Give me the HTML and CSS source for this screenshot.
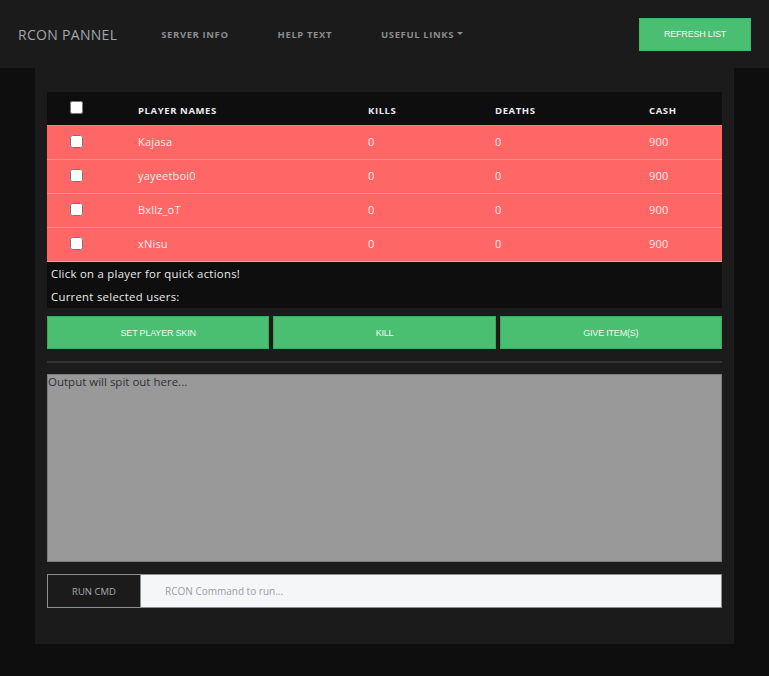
FILE: index.html
```html
<!DOCTYPE html>
<html>
<head>
<meta charset="utf-8">
<link rel="stylesheet" href="styles.css">
</head>
<body>
<nav class="navbar">
  <div class="brand">RCON PANNEL</div>
  <ul class="nav-links">
    <li class="nav-item">SERVER INFO</li>
    <li class="nav-item">HELP TEXT</li>
    <li class="nav-item">USEFUL LINKS<span class="caret"></span></li>
  </ul>
  <button class="btn btn-refresh">REFRESH LIST</button>
</nav>
<main class="container">
  <table class="players">
    <thead>
      <tr>
        <th class="c-check"><input type="checkbox"></th>
        <th class="c-name">PLAYER NAMES</th>
        <th class="c-kills">KILLS</th>
        <th class="c-deaths">DEATHS</th>
        <th class="c-cash">CASH</th>
      </tr>
    </thead>
    <tbody>
      <tr><td class="c-check"><input type="checkbox"></td><td>Kajasa</td><td>0</td><td>0</td><td>900</td></tr>
      <tr><td class="c-check"><input type="checkbox"></td><td>yayeetboi0</td><td>0</td><td>0</td><td>900</td></tr>
      <tr><td class="c-check"><input type="checkbox"></td><td>Bxllz_oT</td><td>0</td><td>0</td><td>900</td></tr>
      <tr><td class="c-check"><input type="checkbox"></td><td>xNisu</td><td>0</td><td>0</td><td>900</td></tr>
    </tbody>
  </table>
  <div class="info">
    <p>Click on a player for quick actions!</p>
    <p>Current selected users:</p>
  </div>
  <div class="actions">
    <button class="btn btn-action">SET PLAYER SKIN</button>
    <button class="btn btn-action">KILL</button>
    <button class="btn btn-action">GIVE ITEM(S)</button>
  </div>
  <hr class="divider">
  <div class="output">Output will spit out here...</div>
  <div class="cmd-row">
    <button class="btn btn-run">RUN CMD</button>
    <input class="cmd-input" type="text" placeholder="RCON Command to run...">
  </div>
</main>
</body>
</html>
```
FILE: styles.css
```css
* { box-sizing: border-box; }
html, body {
  margin: 0;
  padding: 0;
  background: #0e0e0e;
  font-family: "Open Sans", "DejaVu Sans", sans-serif;
}
.navbar {
  height: 68px;
  background: #1b1b1b;
  display: flex;
  align-items: center;
  padding: 0 18px;
}
.brand {
  color: #a1a7b0;
  font-size: 14px;
  letter-spacing: 0.3px;
  margin-right: 44px;
}
.nav-links {
  list-style: none;
  margin: 0;
  padding: 0;
  display: flex;
  flex: 1;
  gap: 49px;
}
.nav-item {
  color: #8c8c8c;
  font-size: 9.5px;
  font-weight: 700;
  letter-spacing: 0.6px;
  display: flex;
  align-items: center;
}
.caret {
  display: inline-block;
  margin-left: 3px;
  border-left: 3px solid transparent;
  border-right: 3px solid transparent;
  border-top: 3px solid #8c8c8c;
  margin-top: -2px;
}
.btn {
  font-family: "Liberation Sans", Arial, sans-serif;
  cursor: pointer;
}
.btn-refresh {
  width: 112px;
  height: 33px;
  background: #4abf72;
  border: 1px solid #44b56a;
  color: #f4f4f4;
  font-size: 9px;
  letter-spacing: -0.2px;
}
.container {
  width: 699px;
  margin-left: 35px;
  background: #1b1b1b;
  padding: 24px 12px 36px;
}
.players {
  width: 100%;
  border-collapse: collapse;
  table-layout: fixed;
}
.players th, .players td {
  text-align: left;
  padding: 0 0 0 12px;
  vertical-align: middle;
}
.players thead tr {
  background: #0e0e0e;
  height: 33px;
  border-bottom: 1px solid #ff8080;
}
.players th {
  color: #e9ecef;
  font-size: 9.5px;
  font-weight: 700;
  letter-spacing: 0.6px;
  padding-top: 5px;
}
.players th.c-check { width: 79px; padding-left: 23px; }
.players th.c-name { width: 230px; }
.players th.c-kills { width: 127px; }
.players th.c-deaths { width: 154px; }
.players tbody tr {
  background: #ff6666;
  height: 34px;
  border-top: 1px solid #ff8c8c;
}
.players tbody tr:first-child { border-top: none; }
.players td {
  color: #fbeaea;
  font-size: 11px;
  font-weight: 500;
  letter-spacing: 0.2px;
  padding-bottom: 1px;
}
.players td.c-check { padding-left: 23px; }
.players input[type="checkbox"] {
  width: 13px;
  height: 13px;
  margin: 0;
  display: block;
}
.players th.c-check input { margin-top: -6px; }
.info {
  background: #0e0e0e;
  padding: 5px 4px 5px;
  border-top: 1px solid #e8a0a0;
}
.info p {
  margin: 0;
  color: #ececec;
  font-size: 11.3px;
  font-weight: 500;
  letter-spacing: 0.3px;
  line-height: 13px;
}
.info p + p { margin-top: 10px; }
.actions {
  display: flex;
  gap: 4px;
  margin-top: 8px;
}
.btn-action {
  flex: 1;
  height: 33px;
  background: #4abf72;
  border: 1px solid #3fa863;
  color: #f1f5f1;
  font-size: 9px;
  letter-spacing: -0.2px;
}
.divider {
  border: none;
  height: 2px;
  background: #333333;
  margin: 12px 0 11px;
}
.output {
  height: 188px;
  background: #999999;
  border: 1px solid #7d7d7d;
  color: #33303a;
  font-size: 11.5px;
  line-height: 14px;
  padding: 0;
}
.cmd-row {
  display: flex;
  margin-top: 12px;
  height: 34px;
}
.btn-run {
  width: 94px;
  background: #1b1b1b;
  border: 1px solid #8a8f96;
  color: #a6aab0;
  font-size: 9.5px;
  font-family: "Open Sans", sans-serif;
}
.cmd-input {
  flex: 1;
  background: #f5f6f8;
  border: 1px solid #8a8f96;
  border-left: none;
  padding: 0 24px;
  font-family: "Open Sans", sans-serif;
  font-size: 10px;
  color: #333;
  outline: none;
}
.cmd-input::placeholder { color: #9aa0a6; }
```
